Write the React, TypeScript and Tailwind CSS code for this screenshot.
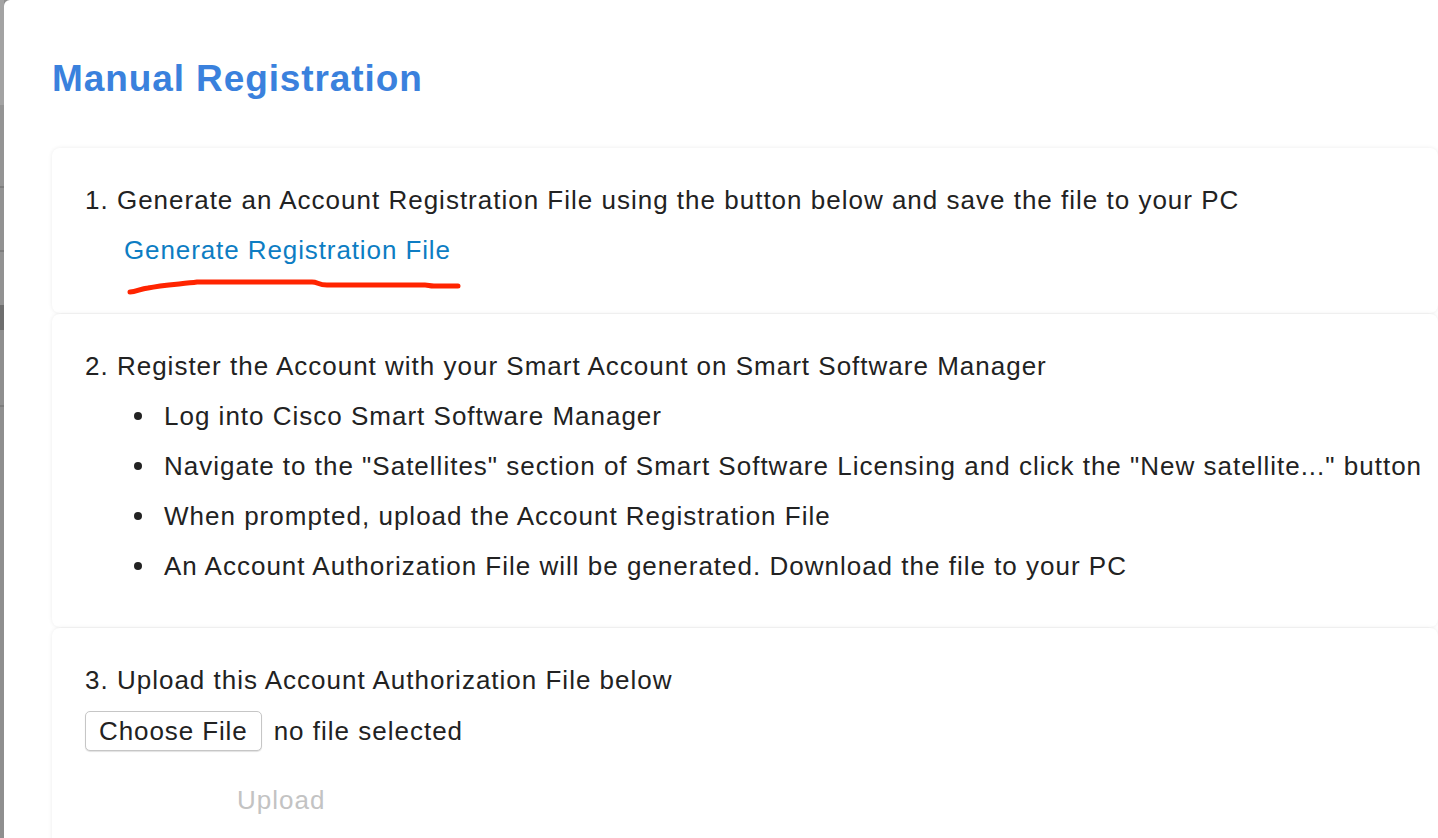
const bullets = [
  'Log into Cisco Smart Software Manager',
  'Navigate to the "Satellites" section of Smart Software Licensing and click the "New satellite..." button',
  'When prompted, upload the Account Registration File',
  'An Account Authorization File will be generated. Download the file to your PC',
]

export default function App() {
  return (
    <div className="flex h-[838px] w-[1438px] overflow-hidden bg-[#8f8f8f]" style={{ fontFamily: '"Liberation Sans", Arial, sans-serif' }}>
      {/* Left edge of the window behind */}
      <div className="flex w-[4px] shrink-0 flex-col">
        <div className="h-[105px] bg-[#a3a3a3]" />
        <div className="h-[81px] bg-[#949494]" />
        <div className="h-[2px] bg-[#7d7d7d]" />
        <div className="h-[62px] bg-[#929292]" />
        <div className="h-[2px] bg-[#7d7d7d]" />
        <div className="h-[53px] bg-[#929292]" />
        <div className="h-[25px] bg-[#6e6e6e]" />
        <div className="h-[75px] bg-[#8f8f8f]" />
        <div className="h-[2px] bg-[#7d7d7d]" />
        <div className="flex-1 bg-[#8f8f8f]" />
      </div>

      {/* Modal */}
      <div className="relative flex-1 rounded-tl-[6px] bg-white pl-[48px] text-[26px] tracking-[1px] whitespace-nowrap text-[#222222]">
        <h1 className="pt-[56px] text-[37px] leading-[46px] font-bold tracking-[0.9px] text-[#3a81dd]">Manual Registration</h1>

        <div className="mt-[46px] flex flex-col gap-[1px]">
          {/* Step 1 */}
          <section className="rounded-[8px] bg-white pt-[27px] pb-[38px] pl-[33px] shadow-[0_0_4px_rgba(0,0,0,0.08)]">
            <p className="leading-[50px]">1. Generate an Account Registration File using the button below and save the file to your PC</p>
            <a className="block pl-[39px] leading-[50px] tracking-[0.9px] text-[#0d7dc3]">Generate Registration File</a>
          </section>

          {/* Step 2 */}
          <section className="rounded-[8px] bg-white pt-[27px] pb-[36px] pl-[33px] shadow-[0_0_4px_rgba(0,0,0,0.08)]">
            <p className="leading-[50px]">2. Register the Account with your Smart Account on Smart Software Manager</p>
            <ul className="pl-[49px] leading-[50px]">
              {bullets.map((b) => (
                <li key={b} className="flex items-center">
                  <span className="mr-[22px] h-[8px] w-[8px] shrink-0 rounded-full bg-[#222222]" />
                  {b}
                </li>
              ))}
            </ul>
          </section>

          {/* Step 3 */}
          <section className="h-[260px] rounded-[8px] bg-white pt-[27px] pl-[33px] shadow-[0_0_4px_rgba(0,0,0,0.08)]">
            <p className="leading-[50px]">3. Upload this Account Authorization File below</p>
            <div className="mt-[6px] flex items-center gap-[12px]">
              <button className="h-[40px] rounded-[5px] border border-[#c6c6c6] bg-white px-[13px] text-[26px] tracking-[0.9px] text-[#222222] shadow-[0_1px_1px_rgba(0,0,0,0.12)]">Choose File</button>
              <span>no file selected</span>
            </div>
            <button className="mt-[35px] ml-[152px] text-[26px] leading-[28px] tracking-[1px] text-[#c3c3c3]">Upload</button>
          </section>
        </div>

        {/* Red pen annotation */}
        <svg className="pointer-events-none absolute top-[278px] left-[118px]" width="345" height="20" viewBox="0 0 345 20">
          <path
            d="M8 14 C14 14 18 11 26 10 C40 7 60 6 75 4 L190 4 C196 4 196 7 205 7 L303 7 C307 7 307 8 312 8 L336 8"
            fill="none"
            stroke="#ff2400"
            strokeWidth="5"
            strokeLinecap="round"
            strokeLinejoin="round"
          />
        </svg>
      </div>
    </div>
  )
}
